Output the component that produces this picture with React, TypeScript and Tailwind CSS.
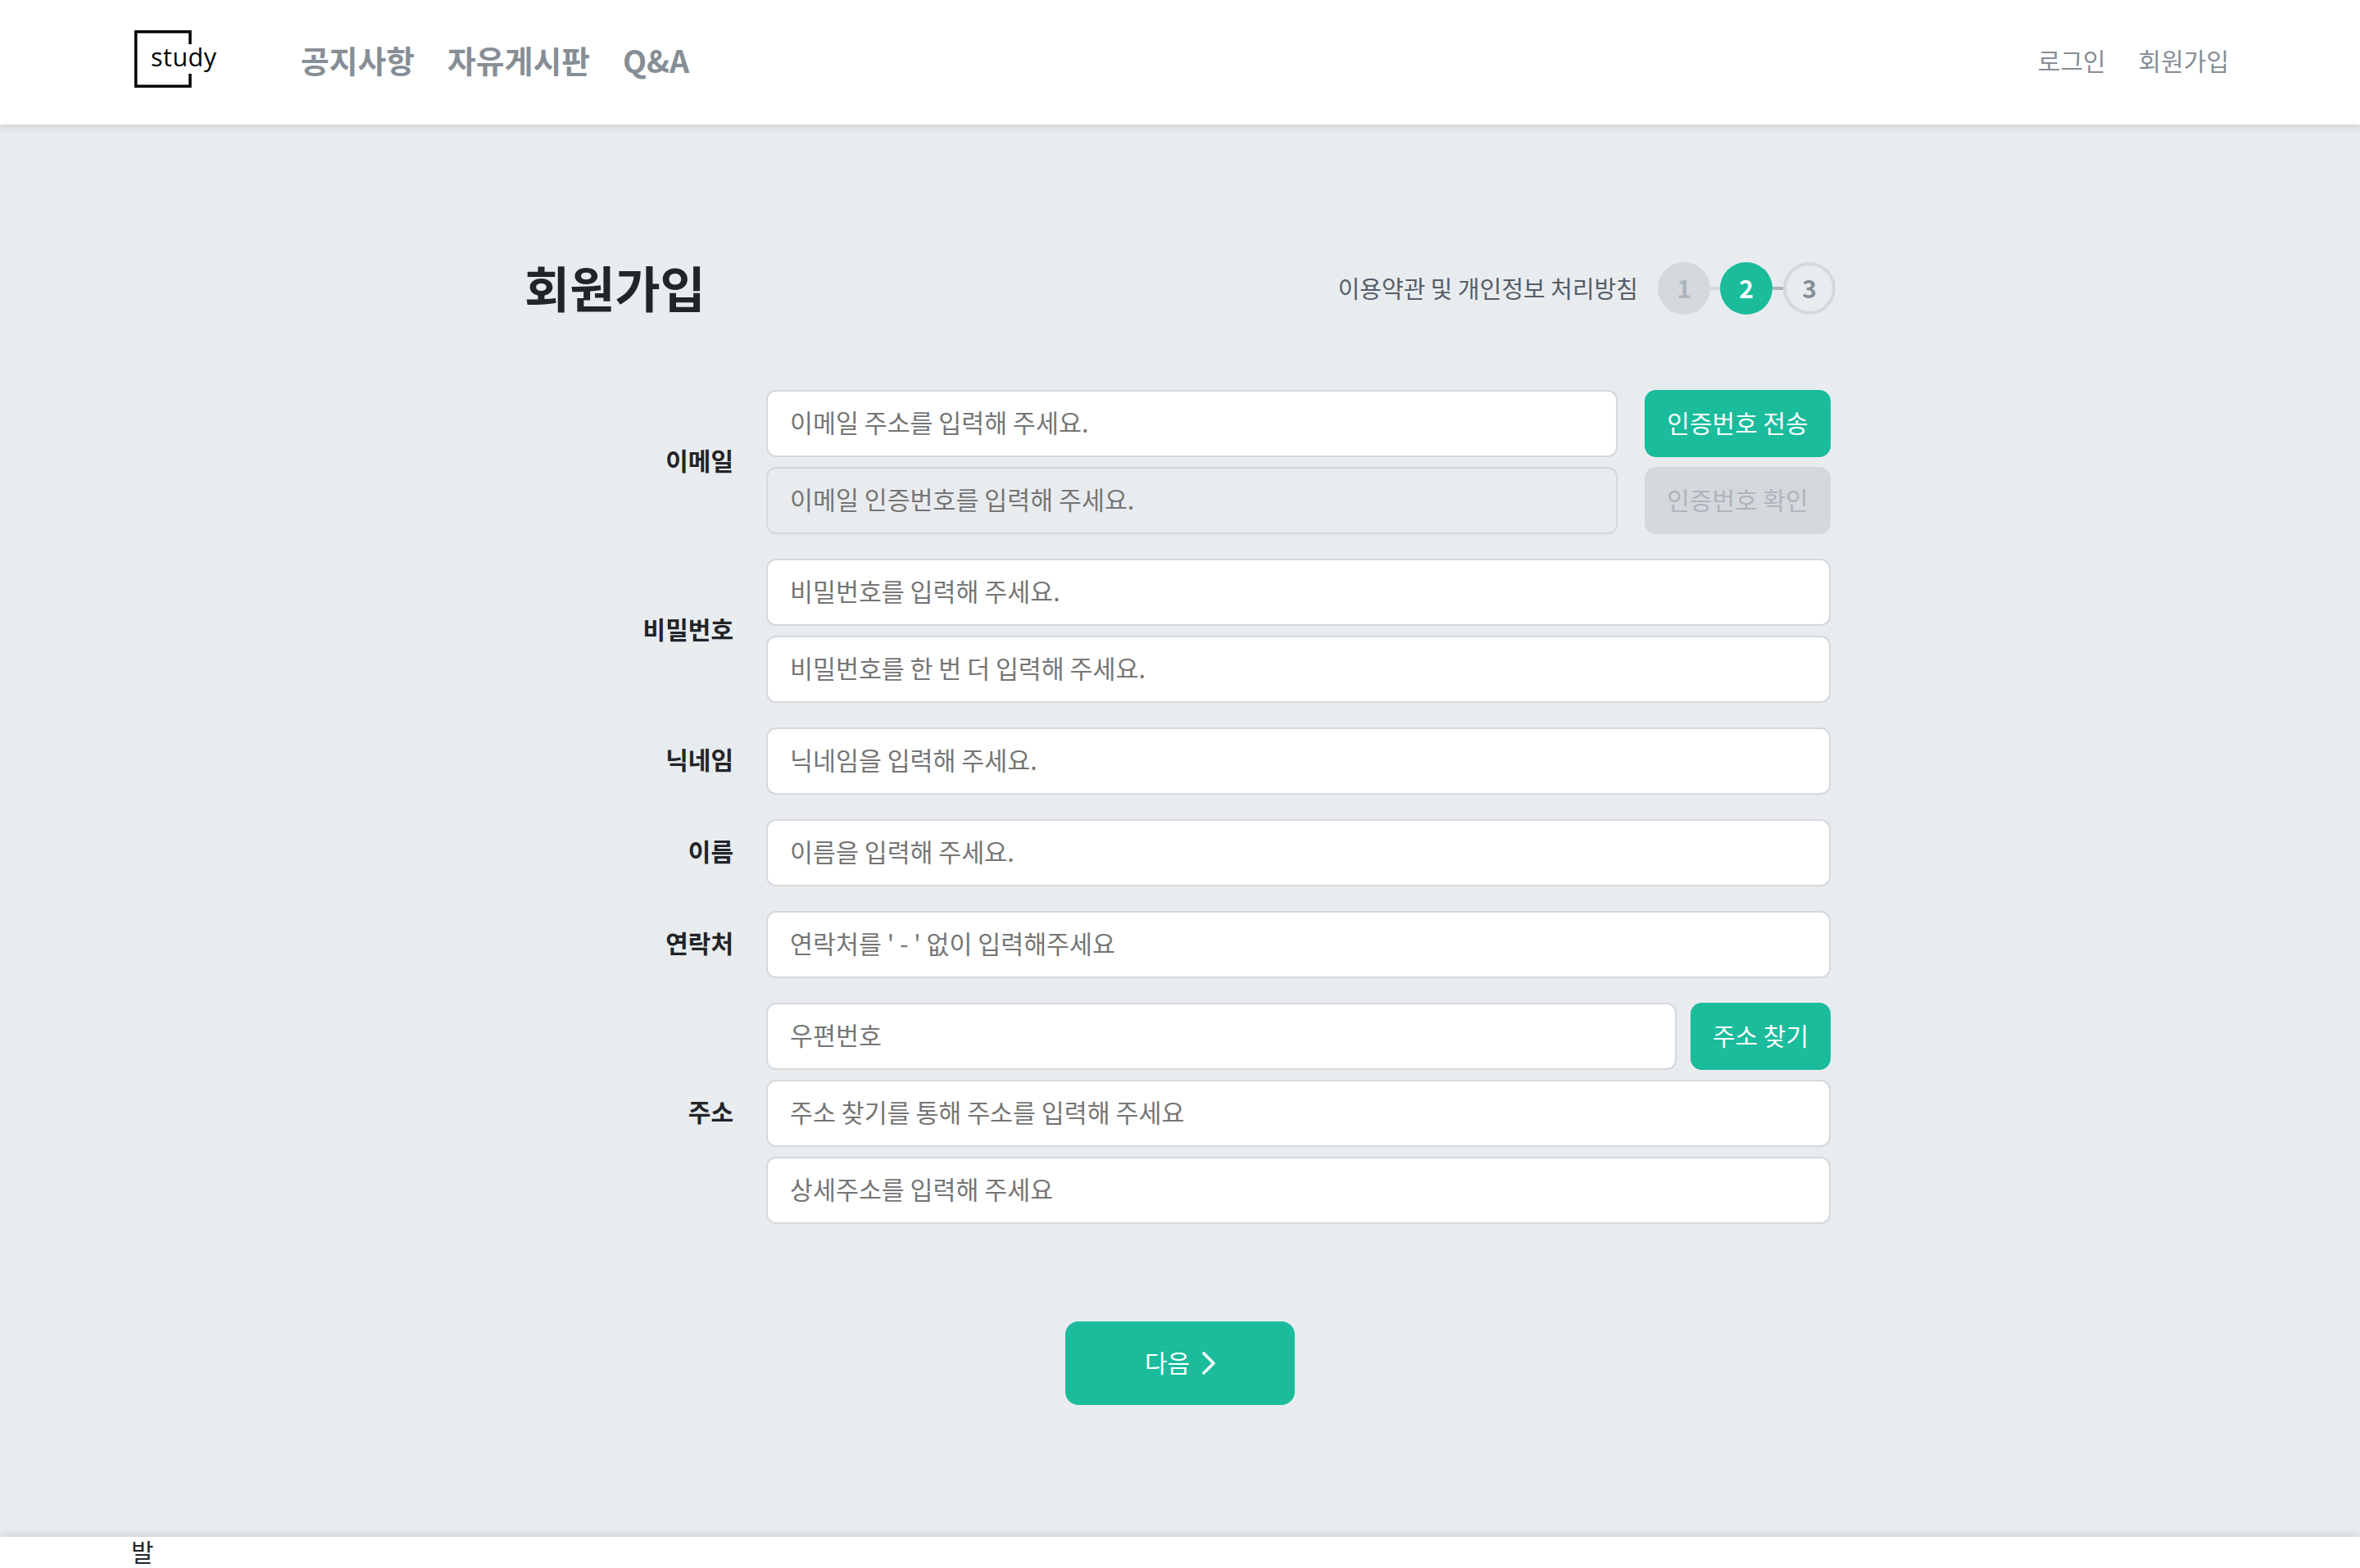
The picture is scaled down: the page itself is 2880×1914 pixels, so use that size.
import React from 'react';

const fontStack = { fontFamily: '"Noto Sans CJK KR", "Noto Sans", sans-serif' };

function Logo() {
  return (
    <div className="relative h-[70px] w-[100px] shrink-0">
      <svg className="h-[70px] w-[70px]" viewBox="0 0 70 70" fill="none" stroke="#000" strokeWidth={3.5}>
        <path d="M68 17V1.75H1.75V68.25H68V53" />
      </svg>
      <span
        className="absolute left-[20px] top-[12px] text-[30.5px] leading-[40px] tracking-[0.5px] text-black"
        style={{ fontFamily: '"Open Sans", sans-serif' }}
      >
        study
      </span>
    </div>
  );
}

function Header() {
  return (
    <header className="relative z-10 flex h-[152px] shrink-0 items-center justify-between bg-white pb-[8px] pl-[164px] pr-[160px] shadow-[0_2px_10px_rgba(0,0,0,0.14)]">
      <div className="flex items-center">
        <Logo />
        <nav className="ml-[103px] flex items-center gap-[40px] pt-[2px] text-[37.8px] font-semibold text-[#868e96]">
          <a>공지사항</a>
          <a>자유게시판</a>
          <a>Q&amp;A</a>
        </nav>
      </div>
      <div className="flex items-center gap-[40px] pt-[2px] text-[30px] text-[#868e96]">
        <a>로그인</a>
        <a>회원가입</a>
      </div>
    </header>
  );
}

function Steps() {
  return (
    <div className="flex items-center">
      <span className="mr-[24px] text-[29px] text-[#545e69]">이용약관 및 개인정보 처리방침</span>
      <div className="flex h-[64px] w-[64px] items-center justify-center rounded-full bg-[#d5d8dc] pb-[2px] text-[30px] font-bold text-[#adb5bd]">1</div>
      <div className="h-[4px] w-[12px] bg-[#d5d8dc]" />
      <div className="flex h-[64px] w-[64px] items-center justify-center rounded-full bg-[#1abc9c] pb-[2px] text-[30px] font-bold text-white">2</div>
      <div className="h-[4px] w-[13px] bg-[#adb5bd]" />
      <div className="flex h-[64px] w-[64px] items-center justify-center rounded-full border-[4px] border-[#d5d8dc] pb-[2px] text-[30px] font-bold text-[#868e96]">3</div>
    </div>
  );
}

function Field({ placeholder, disabled }: { placeholder: string; disabled?: boolean }) {
  return (
    <input
      disabled={disabled}
      placeholder={placeholder}
      className={
        disabled
          ? 'h-[82px] w-full min-w-0 rounded-[12px] border-2 border-[#d5d8dc] bg-transparent pb-[4px] pl-[27px] pr-[28px] text-[30.4px] outline-none placeholder:text-[#757575]'
          : 'h-[82px] w-full min-w-0 rounded-[12px] border-2 border-[#d5d8dc] bg-white pb-[4px] pl-[27px] pr-[28px] text-[30.4px] outline-none placeholder:text-[#757575]'
      }
    />
  );
}

function Row({ label, children }: { label: string; children: React.ReactNode }) {
  return (
    <div className="flex items-center gap-[40px]">
      <label className="w-[255px] shrink-0 pb-[6px] text-right text-[30px] font-bold text-[#212529]">{label}</label>
      <div className="flex min-w-0 flex-1 flex-col gap-[12px]">{children}</div>
    </div>
  );
}

export default function App() {
  return (
    <div className="flex min-h-screen flex-col bg-[#e9ecef]" style={fontStack}>
      <Header />

      <main className="mx-auto flex w-[1600px] flex-1 flex-col pt-[168px]">
        <div className="flex h-[64px] items-center justify-between">
          <h1 className="pb-[5px] text-[60px] font-semibold text-[#212529]">회원가입</h1>
          <Steps />
        </div>

        <form className="mt-[92px] flex w-[1594px] flex-col gap-[30px]">
          <Row label="이메일">
            <div className="flex gap-[33px]">
              <Field placeholder="이메일 주소를 입력해 주세요." />
              <button type="button" className="h-[82px] w-[227px] shrink-0 rounded-[14px] bg-[#1abc9c] pb-[4px] text-[30px] text-white">인증번호 전송</button>
            </div>
            <div className="flex gap-[33px]">
              <Field disabled placeholder="이메일 인증번호를 입력해 주세요." />
              <button type="button" className="h-[82px] w-[227px] shrink-0 rounded-[14px] bg-[#d5d8dc] pb-[4px] text-[30px] text-[#adb5bd]">인증번호 확인</button>
            </div>
          </Row>
          <Row label="비밀번호">
            <Field placeholder="비밀번호를 입력해 주세요." />
            <Field placeholder="비밀번호를 한 번 더 입력해 주세요." />
          </Row>
          <Row label="닉네임">
            <Field placeholder="닉네임을 입력해 주세요." />
          </Row>
          <Row label="이름">
            <Field placeholder="이름을 입력해 주세요." />
          </Row>
          <Row label="연락처">
            <Field placeholder="연락처를 ' - ' 없이 입력해주세요" />
          </Row>
          <Row label="주소">
            <div className="flex gap-[17px]">
              <Field placeholder="우편번호" />
              <button type="button" className="h-[82px] w-[171px] shrink-0 rounded-[14px] bg-[#1abc9c] pb-[4px] text-[30px] text-white">주소 찾기</button>
            </div>
            <Field placeholder="주소 찾기를 통해 주소를 입력해 주세요" />
            <Field placeholder="상세주소를 입력해 주세요" />
          </Row>
        </form>

        <button type="button" className="mx-auto mt-[119px] flex h-[102px] w-[280px] items-center justify-center gap-[15px] rounded-[16px] bg-[#1abc9c] text-[30px] text-white">
          <span className="pb-[4px]">다음</span>
          <svg className="h-[28px] w-[16px]" viewBox="0 0 16 28" fill="none" stroke="currentColor" strokeWidth={3.6} strokeLinecap="round" strokeLinejoin="round">
            <path d="M2 2l12 12L2 26" />
          </svg>
        </button>
      </main>

      <footer className="h-[38px] shrink-0 bg-white pl-[160px] text-[30px] leading-[34px] text-[#212529] shadow-[0_-2px_10px_rgba(0,0,0,0.12)]">발</footer>
    </div>
  );
}
